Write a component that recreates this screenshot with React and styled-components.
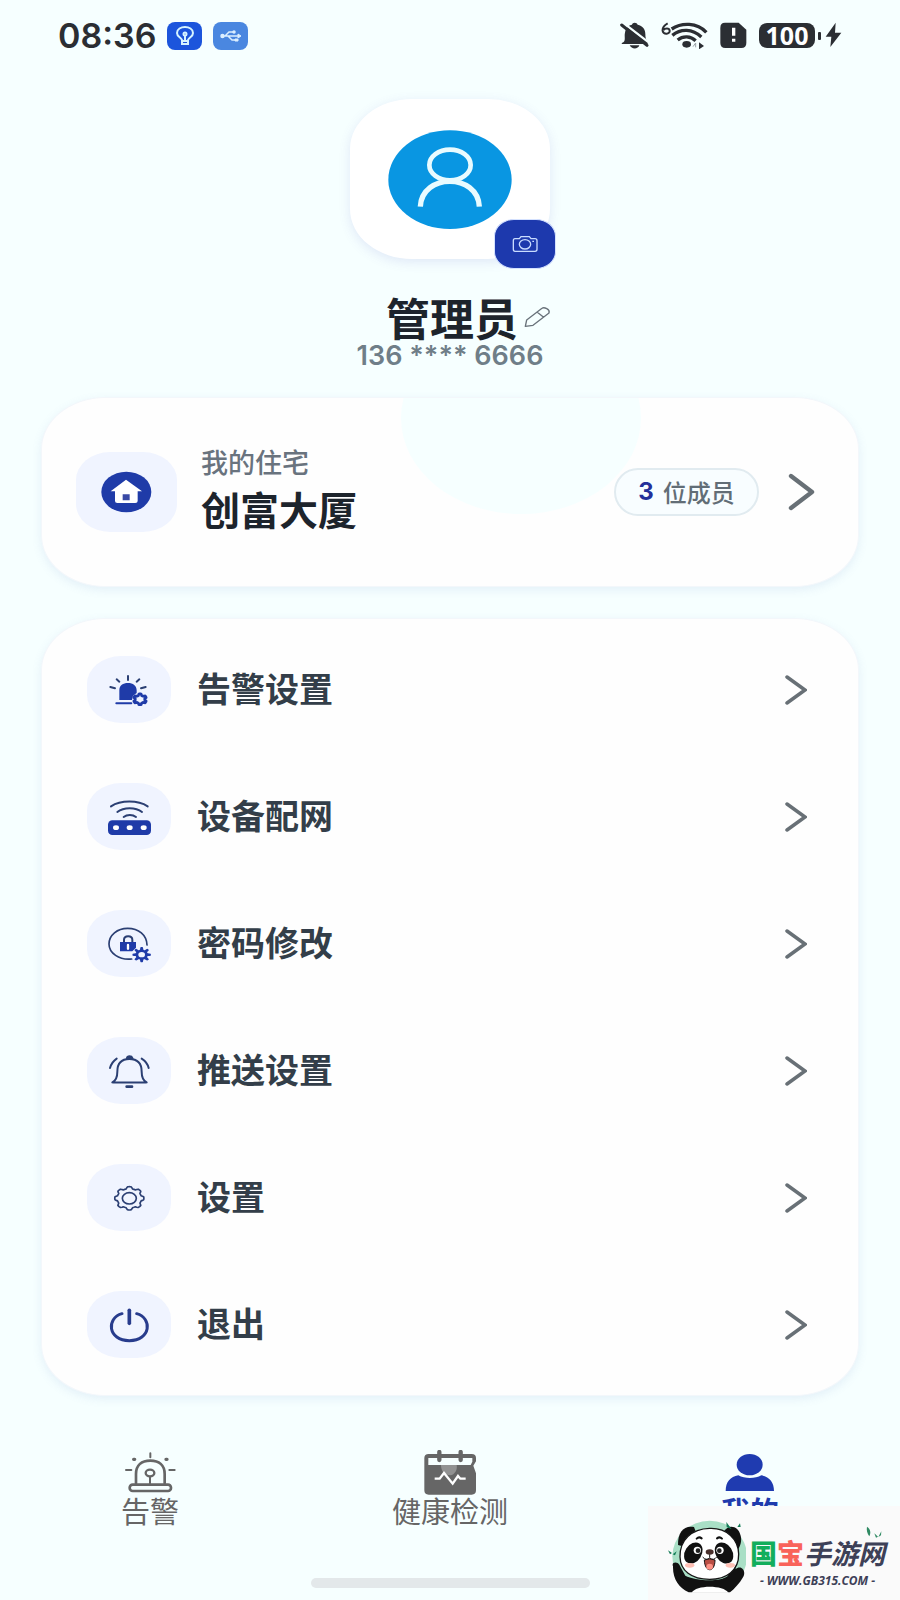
import React from 'react'
import styled, { createGlobalStyle } from 'styled-components'

const GlobalStyle = createGlobalStyle`
  * {
    box-sizing: border-box;
  }

  body {
    margin: 0;
    background: #f6ffff;
    color: #2f3a45;
    font-family: 'Noto Sans CJK SC', sans-serif;
  }

  svg {
    display: block;
    flex: none;
  }

  button {
    padding: 0;
    border: 0;
    background: none;
    color: inherit;
    font: inherit;
    cursor: pointer;
  }
`

const Page = styled.div`
  display: flex;
  flex-direction: column;
  min-height: 100vh;
`

const StatusBar = styled.header`
  display: flex;
  align-items: center;
  justify-content: space-between;
  height: 71px;
  padding: 0 58px;
  color: #2b2e33;
`

const StatusGroup = styled.div`
  display: flex;
  align-items: center;
  gap: ${(props) => props.$gap};
`

const Clock = styled.time`
  font-family: Inter, sans-serif;
  font-size: 34px;
  font-weight: 600;
  line-height: 40px;
`

const AppBadge = styled.span`
  display: grid;
  place-items: center;
  width: 35px;
  height: 28px;
  border-radius: 8px;
  background: ${(props) => props.$color};
`

const Battery = styled.span`
  display: flex;
  align-items: center;
  gap: 3px;

  &::after {
    content: '';
    width: 3px;
    height: 8px;
    border-radius: 1px;
    background: #2b2e33;
  }
`

const BatteryLevel = styled.span`
  width: 56px;
  height: 25px;
  border-radius: 8px;
  background: #2b2e33;
  color: #fff;
  font-family: 'Open Sans', sans-serif;
  font-size: 25px;
  font-weight: 700;
  line-height: 24px;
  text-align: center;
`

const Profile = styled.section`
  display: flex;
  flex-direction: column;
  align-items: center;
  padding-top: 28px;
`

const Avatar = styled.div`
  position: relative;
  display: grid;
  place-items: center;
  width: 200px;
  height: 160px;
  border-radius: 62px / 50px;
  background: #fff;
  box-shadow: 0 3px 12px rgba(90, 90, 200, 0.14);
`

const CameraButton = styled.button`
  position: absolute;
  right: -6px;
  bottom: -10px;
  display: grid;
  place-items: center;
  width: 62px;
  height: 50px;
  border: 1px solid #d5e2ff;
  border-radius: 20px / 17px;
  background: #1d39ad;
`

const NameRow = styled.div`
  display: grid;
  grid-template-columns: 1fr auto 1fr;
  align-items: center;
  gap: 6px;
  width: 100%;
  margin-top: 36px;
  padding-left: 4px;
`

const Name = styled.h1`
  grid-column: 2;
  margin: 0;
  color: #1d242c;
  font-size: 44px;
  font-weight: 700;
  line-height: 44px;
`

const Phone = styled.p`
  margin: 3px 0 0;
  color: #6f7e88;
  font-family: Inter, sans-serif;
  font-size: 27px;
  font-weight: 600;
  line-height: 28px;
`

const Card = styled.section`
  position: relative;
  margin: ${(props) => props.$top} 41px 0;
  border: 1px solid #f3f7fb;
  border-radius: 64px / 52px;
  background: #fefefe;
  box-shadow: 0 3px 10px rgba(100, 130, 200, 0.12);
`

const HomeButton = styled.button`
  position: relative;
  display: flex;
  align-items: center;
  width: 100%;
  height: 188px;
  padding: 0 43px 0 34px;
  overflow: hidden;
  border-radius: inherit;
  text-align: left;
`

const Glow = styled.span`
  position: absolute;
  top: -76px;
  left: 44%;
  width: 240px;
  height: 192px;
  border-radius: 50%;
  background: #f6ffff;
`

const IconTile = styled.span`
  display: grid;
  flex: none;
  place-items: center;
  width: ${(props) => (props.$large ? 101 : 84)}px;
  height: ${(props) => (props.$large ? 80 : 67)}px;
  border-radius: 34px / 28px;
  background: #f0f4ff;
`

const HomeText = styled.span`
  position: relative;
  display: flex;
  flex: 1;
  flex-direction: column;
  gap: 4px;
  margin-left: 24px;
  padding-bottom: 4px;
`

const HomeLabel = styled.span`
  color: #69737e;
  font-size: 27px;
  font-weight: 500;
  line-height: 32px;
`

const HomeName = styled.strong`
  color: #1d242c;
  font-size: 39px;
  font-weight: 700;
  line-height: 52px;
`

const Members = styled.span`
  position: relative;
  display: flex;
  align-items: center;
  justify-content: center;
  gap: 9px;
  width: 145px;
  height: 48px;
  margin-right: 29px;
  border: 2px solid #e1ebf0;
  border-radius: 24px;
  background: #f8fdff;
  color: #626d76;
  font-size: 24px;
  font-weight: 500;
  line-height: 28px;
`

const MemberCount = styled.b`
  color: #24309a;
  font-family: Inter, sans-serif;
  font-weight: 700;
`

const Menu = styled.ul`
  margin: 0;
  padding: 7px 0;
  list-style: none;
`

const MenuButton = styled.button`
  display: flex;
  align-items: center;
  gap: 26px;
  width: 100%;
  height: 127px;
  padding: 0 51px 0 45px;
  text-align: left;
`

const MenuLabel = styled.span`
  flex: 1;
  padding-bottom: 4px;
  color: #333e49;
  font-size: 34px;
  font-weight: 700;
  line-height: 40px;
`

const TabBar = styled.nav`
  display: grid;
  grid-template-columns: repeat(3, 1fr);
  margin-top: 54px;
`

const Tab = styled.a`
  display: flex;
  flex-direction: column;
  align-items: center;
  color: ${(props) => (props.$active ? '#1f3bad' : '#666')};
  font-size: 29px;
  font-weight: ${(props) => (props.$active ? 700 : 400)};
  line-height: 30px;
  text-decoration: none;
`

const HomeIndicator = styled.div`
  width: 31%;
  height: 10px;
  margin: 53px auto 12px;
  border-radius: 5px;
  background: #e3e8ea;
`

const Watermark = styled.aside`
  position: fixed;
  right: 0;
  bottom: 0;
  display: flex;
  align-items: flex-start;
  gap: 4px;
  width: 252px;
  height: 94px;
  padding: 11px 0 0 18px;
  background: #fafafa;
`

const SiteText = styled.div`
  display: flex;
  flex-direction: column;
  align-items: center;
  padding-top: 18px;
  color: #3d4057;
  font-style: italic;
  white-space: nowrap;
`

const SiteName = styled.span`
  font-size: 27px;
  font-weight: 700;
  line-height: 36px;
`

const SiteChar = styled.span`
  color: ${(props) => props.$color};
  font-style: normal;
  font-weight: 900;
`

const SiteUrl = styled.span`
  font-family: 'Open Sans', sans-serif;
  font-size: 12px;
  font-weight: 700;
  line-height: 20px;
`

const BLUE = '#1f3ba8'
const DARK = '#2b3f73'

const gearPath = (cx, cy, rx, ry, teeth, depth) => {
  const points = []
  const steps = teeth * 12
  for (let i = 0; i < steps; i += 1) {
    const a = (i / steps) * Math.PI * 2
    const wave = Math.max(-1, Math.min(1, Math.cos(a * teeth) * 1.8))
    const k = 1 + depth * wave
    points.push(`${(cx + Math.sin(a) * rx * k).toFixed(1)} ${(cy - Math.cos(a) * ry * k).toFixed(1)}`)
  }
  return `M${points.join('L')}Z`
}

function Chevron({ large }) {
  return large ? (
    <svg width="27" height="38" viewBox="0 0 27 38" fill="none" stroke="#687076" strokeWidth="4.4" strokeLinecap="round" strokeLinejoin="round">
      <path d="M3 3L24 19L3 35" />
    </svg>
  ) : (
    <svg width="22" height="30" viewBox="0 0 22 30" fill="none" stroke="#687076" strokeWidth="3.5" strokeLinecap="round" strokeLinejoin="miter">
      <path d="M2 2L20 15L2 28" />
    </svg>
  )
}

function MenuIcon({ viewBox, children }) {
  return (
    <svg width="50" height="42" viewBox={viewBox} fill="none" stroke={DARK} strokeWidth="6" strokeLinecap="round">
      {children}
    </svg>
  )
}

const menuItems = [
  {
    label: '告警设置',
    icon: (
      <MenuIcon viewBox="101 83 150 126">
        <path d="M173 104V116M139 114L147 121M207 114L199 121M120 137L134 141M226 137L212 141" />
        <path d="M147 176V147C147 132 158 125 173 125C188 125 199 133 199 147V155L188 163L185 176Z" fill={BLUE} stroke="none" />
        <path d="M138 186H183" stroke={BLUE} strokeWidth="6" />
        <path d={gearPath(209, 174, 17, 14, 6, 0.16)} fill="none" stroke={BLUE} strokeWidth="8" />
      </MenuIcon>
    ),
  },
  {
    label: '设备配网',
    icon: (
      <MenuIcon viewBox="101 465 150 126">
        <path d="M122 496C151 477 203 477 232 496M141 513C160 498 196 498 215 513M160 528C170 520 187 520 197 528" />
        <rect x="113" y="538" width="129" height="44" rx="13" fill={BLUE} stroke="none" />
        <g fill="#fff" stroke="none">
          <ellipse cx="137" cy="560" rx="9" ry="7" />
          <ellipse cx="178" cy="560" rx="9" ry="7" />
          <ellipse cx="220" cy="560" rx="9" ry="7" />
        </g>
      </MenuIcon>
    ),
  },
  {
    label: '密码修改',
    icon: (
      <MenuIcon viewBox="101 97 150 126">
        <path d="M184 205C146 209 116 187 116 160C116 133 141 113 172 113C205 113 229 133 230 163" strokeWidth="5" />
        <path d="M161 156V147C161 133 186 133 186 147V156" />
        <path d="M149 154H197V171L186 182H149Z" fill={BLUE} stroke="none" />
        <path d="M173 163V174" stroke="#fff" strokeWidth="7" />
        <path d={gearPath(214, 192, 23, 19, 8, 0.2)} fill={BLUE} stroke="none" />
        <ellipse cx="214" cy="192" rx="10" ry="8" fill="#f0f4ff" stroke="none" />
      </MenuIcon>
    ),
  },
  {
    label: '推送设置',
    icon: (
      <MenuIcon viewBox="101 479 150 126">
        <path d="M126 576C138 570 141 560 141 544C141 519 154 506 177 506C201 506 214 519 214 544C214 560 217 570 229 576C230 577 125 577 126 576Z" strokeLinejoin="round" />
        <path d="M170 503C171 496 184 496 186 503Z" fill={DARK} />
        <path d="M169 589H185" strokeWidth="8" />
        <path d="M119 533C123 520 130 511 139 505M214 505C225 512 232 521 235 533" />
      </MenuIcon>
    ),
  },
  {
    label: '设置',
    icon: (
      <MenuIcon viewBox="101 83 150 126">
        <path d={gearPath(177, 147, 40, 32, 8, 0.09)} strokeWidth="5" strokeLinejoin="round" />
        <ellipse cx="177" cy="147" rx="21" ry="17" strokeWidth="5" />
      </MenuIcon>
    ),
  },
  {
    label: '退出',
    icon: (
      <MenuIcon viewBox="101 465 150 126">
        <path d="M155 494C107 507 112 575 177 575C242 575 247 507 199 494" stroke="#283c8d" strokeWidth="9" />
        <path d="M177 484V523" stroke="#283c8d" strokeWidth="11" />
      </MenuIcon>
    ),
  },
]

function StatusIcons() {
  return (
    <StatusGroup $gap="12px">
      <svg width="29" height="27" viewBox="65 67 87 81" fill="#2b2e33">
        <path d="M75 128C83 122 77 109 80 99C82 84 92 76 101 75C102 67 116 67 118 75C133 79 141 88 141 103C141 115 143 120 149 128C151 131 148 133 145 133H72C68 133 70 130 75 128Z" />
        <path d="M94 137H123C119 150 99 149 94 137Z" />
        <path d="M70 66L156 132" stroke="#f6ffff" strokeWidth="7" />
        <path d="M70 76L146 137" stroke="#2b2e33" strokeWidth="9" strokeLinecap="round" />
      </svg>
      <svg width="47" height="27" viewBox="186 67 141 81" fill="none" stroke="#2b2e33" strokeWidth="10">
        <path d="M206 71C192 79 190 88 191 94C194 106 213 104 212 93C211 84 197 85 193 92" strokeWidth="6" />
        <path d="M218 88C248 68 294 68 322 98M220 107C246 86 280 87 307 112M236 121C252 108 275 109 290 123" />
        <ellipse cx="263" cy="134" rx="13" ry="10" fill="#2b2e33" stroke="none" />
        <path d="M282 141L290 130V143" stroke="#98a0a5" strokeWidth="3" />
        <path d="M300 128V149L315 139Z" fill="#2b2e33" stroke="none" />
      </svg>
      <svg width="27" height="27" viewBox="359 67 81 81">
        <path d="M374 69H415L438 90V130Q438 145 423 145H375Q360 145 360 130V84Q360 69 374 69Z" fill="#2b2e33" />
        <path d="M400 84V108M400 117V126" stroke="#fff" strokeWidth="10" />
      </svg>
      <StatusGroup $gap="4px">
        <Battery>
          <BatteryLevel>100</BatteryLevel>
        </Battery>
        <svg width="17" height="27" viewBox="676 67 51 81" fill="#2b2e33">
          <path d="M708 69L678 111H695L692 142L725 99H706Z" />
        </svg>
      </StatusGroup>
    </StatusGroup>
  )
}

function Panda() {
  return (
    <svg width="80" height="76" viewBox="105 262 240 228" aria-hidden="true">
      <ellipse cx="236" cy="380" rx="112" ry="107" fill="#a9dfc6" />
      <path d="M141 346C140 306 160 286 189 292L198 315L163 352Z" fill="#111" />
      <path d="M277 308C290 282 322 286 329 318C333 334 328 348 322 358Z" fill="#111" />
      <path d="M126 410C120 397 139 394 145 405L163 438C190 452 265 460 291 438L299 411C307 396 318 407 313 419C331 404 346 425 337 441C325 462 310 477 297 488H173C144 475 125 449 126 410Z" fill="#111" />
      <path d="M182 489C194 465 278 465 292 489Z" fill="#fff" />
      <path d="M236 296C288 294 322 329 323 373C324 423 285 449 236 449C181 449 148 423 147 381C146 333 181 297 236 296Z" fill="#fff" stroke="#151515" strokeWidth="4" />
      <ellipse cx="187" cy="370" rx="25" ry="34" transform="rotate(32 187 370)" fill="#111" />
      <ellipse cx="279" cy="370" rx="25" ry="34" transform="rotate(-32 279 370)" fill="#111" />
      <circle cx="199" cy="362" r="11" fill="#fff" />
      <circle cx="267" cy="362" r="11" fill="#fff" />
      <circle cx="201" cy="363" r="7" fill="#222" />
      <circle cx="265" cy="363" r="7" fill="#222" />
      <path d="M197 327Q204 320 212 326M258 326Q266 320 273 327" fill="none" stroke="#111" strokeWidth="6" strokeLinecap="round" />
      <ellipse cx="236" cy="367" rx="12" ry="8" fill="#492f2b" />
      <path d="M236 374V384M215 382Q225 394 236 385Q248 394 257 382" fill="none" stroke="#171717" strokeWidth="3" />
      <path d="M220 391Q236 384 252 391C252 430 221 430 220 391Z" fill="#b94e43" stroke="#171717" strokeWidth="3" />
      <ellipse cx="236" cy="411" rx="10" ry="9" fill="#ff9185" />
      <ellipse cx="176" cy="407" rx="14" ry="7" fill="#ffc0b5" />
      <ellipse cx="298" cy="407" rx="14" ry="7" fill="#ffc0b5" />
      <path d="M286 277L302 299L287 292ZM319 292L327 281L329 292ZM111 362L123 370L117 374ZM125 374L137 365L132 377Z" fill="#147b56" />
    </svg>
  )
}

const Sprig = styled.svg`
  position: absolute;
  top: 20px;
  right: 18px;
`

function App() {
  return (
    <Page>
      <GlobalStyle />
      <StatusBar>
        <StatusGroup $gap="11px">
          <Clock>08:36</Clock>
          <AppBadge $color="#1c55dc">
            <svg width="22" height="22" viewBox="0 0 22 22" fill="none" stroke="#d6f4ff" strokeWidth="2">
              <path d="M8 15C7 12 3 12 3 8C3 4 7 2 11 2C15 2 19 4 19 8C19 12 15 12 14 15V19H8ZM8 16H14M11 10V15" />
              <circle cx="11" cy="9" r="1.5" />
            </svg>
          </AppBadge>
          <AppBadge $color="#4a87e0">
            <svg width="22" height="12" viewBox="0 0 22 12" fill="none" stroke="#dcefff" strokeWidth="1.5">
              <path d="M2 6H19M5 6L9 2H13M8 6L12 10H16" />
              <circle cx="2.5" cy="6" r="1.5" fill="#dcefff" />
              <circle cx="14" cy="2" r="1" fill="#dcefff" />
              <path d="M15 9H18V11H15ZM18 4L21 6L18 8Z" fill="#dcefff" strokeWidth="1" />
            </svg>
          </AppBadge>
        </StatusGroup>
        <StatusIcons />
      </StatusBar>

      <Profile>
        <Avatar>
          <svg width="126" height="101" viewBox="201 143 378 303" fill="none">
            <ellipse cx="390" cy="295" rx="185" ry="148" fill="#0996e2" />
            <g stroke="#e9fbff" strokeWidth="14">
              <ellipse cx="390" cy="251" rx="62" ry="46" />
              <path d="M301 376C306 275 473 275 478 376" strokeWidth="16" />
            </g>
          </svg>
          <CameraButton aria-label="更换头像">
            <svg width="27" height="18" viewBox="576 468 81 54" fill="none" stroke="#c9dcff" strokeWidth="4">
              <path d="M585 479H598L603 473H628L633 479H645Q651 479 651 485V511Q651 517 645 517H585Q580 517 580 511V485Q580 479 585 479Z" />
              <ellipse cx="615" cy="496" rx="17" ry="14" />
              <path d="M637 487H642" />
            </svg>
          </CameraButton>
        </Avatar>
        <NameRow>
          <Name>管理员</Name>
          <button aria-label="编辑名称">
            <svg width="27" height="22" viewBox="624 690 81 66" fill="none" stroke="#69727a" strokeWidth="4" strokeLinejoin="round">
              <path d="M628 751L632 732L678 697C684 692 703 700 699 711L651 748ZM663 708L683 724" />
            </svg>
          </button>
        </NameRow>
        <Phone>136 **** 6666</Phone>
      </Profile>

      <Card $top="27px">
        <HomeButton>
          <Glow />
          <IconTile $large>
            <svg width="51" height="42" viewBox="213 273 153 126">
              <ellipse cx="289" cy="336" rx="75" ry="61" fill="#1f3ba8" />
              <path d="M242 334L288 299L336 334H323V363Q323 369 316 369H262Q255 369 255 363V334Z" fill="#fff" />
              <path d="M278 343H299V361H278Z" fill="#3949a5" />
            </svg>
          </IconTile>
          <HomeText>
            <HomeLabel>我的住宅</HomeLabel>
            <HomeName>创富大厦</HomeName>
          </HomeText>
          <Members>
            <MemberCount>3</MemberCount>
            位成员
          </Members>
          <Chevron large />
        </HomeButton>
      </Card>

      <Card $top="31px">
        <Menu>
          {menuItems.map((item) => (
            <li key={item.label}>
              <MenuButton>
                <IconTile>{item.icon}</IconTile>
                <MenuLabel>{item.label}</MenuLabel>
                <Chevron />
              </MenuButton>
            </li>
          ))}
        </Menu>
      </Card>

      <TabBar>
        <Tab href="#alarm">
          <svg width="52" height="45" viewBox="102 60 156 135" fill="none" stroke="#666" strokeWidth="8" strokeLinecap="round">
            <path d="M138 160V132C138 106 155 92 181 92C207 92 224 106 224 132V160" />
            <rect x="119" y="164" width="124" height="19" rx="9" />
            <ellipse cx="180" cy="129" rx="13" ry="10" strokeWidth="7" />
            <path d="M180 140V160M181 70V82M108 120H124M238 120H254" strokeWidth="6" />
            <path d="M131 88H134M228 88H231" strokeWidth="10" />
          </svg>
          告警
        </Tab>
        <Tab href="#health">
          <svg width="53" height="45" viewBox="1004 60 159 135">
            <path d="M1018 72H1147Q1160 72 1160 84V94L1152 107L1160 130V181Q1160 194 1147 194H1018Q1005 194 1005 181V84Q1005 72 1018 72Z" fill="#666" />
            <path d="M1017 84H1149V95L1144 105H1017Z" fill="#f6ffff" />
            <path d="M1055 105H1102C1105 120 1096 134 1083 136C1064 135 1055 122 1055 105Z" fill="#929292" />
            <path d="M1050 66V90M1114 66V90" stroke="#666" strokeWidth="13" strokeLinecap="round" />
            <path d="M1036 146H1051L1064 129L1090 161L1106 138L1113 146H1129" fill="none" stroke="#fff" strokeWidth="7" />
          </svg>
          健康检测
        </Tab>
        <Tab href="#mine" $active aria-current="page">
          <svg width="52" height="45" viewBox="282 60 156 135" fill="#1f3bb0">
            <ellipse cx="359" cy="104" rx="39" ry="32" />
            <path d="M287 183C287 155 301 141 325 136C344 147 376 147 394 136C419 141 432 157 432 183Z" />
          </svg>
          我的
        </Tab>
      </TabBar>
      <HomeIndicator />

      <Watermark>
        <Panda />
        <SiteText>
          <SiteName>
            <SiteChar $color="#12ae5c">国</SiteChar>
            <SiteChar $color="#f9635a">宝</SiteChar>
            手游网
          </SiteName>
          <SiteUrl>- WWW.GB315.COM -</SiteUrl>
        </SiteText>
        <Sprig width="16" height="12" viewBox="704 292 48 36" fill="#2f8a63" aria-hidden="true">
          <path d="M707 294C718 302 719 312 714 323C707 313 705 304 707 294Z" />
          <path d="M729 314L740 324L734 327ZM750 308L749 320L741 325Z" />
        </Sprig>
      </Watermark>
    </Page>
  )
}

export default App
